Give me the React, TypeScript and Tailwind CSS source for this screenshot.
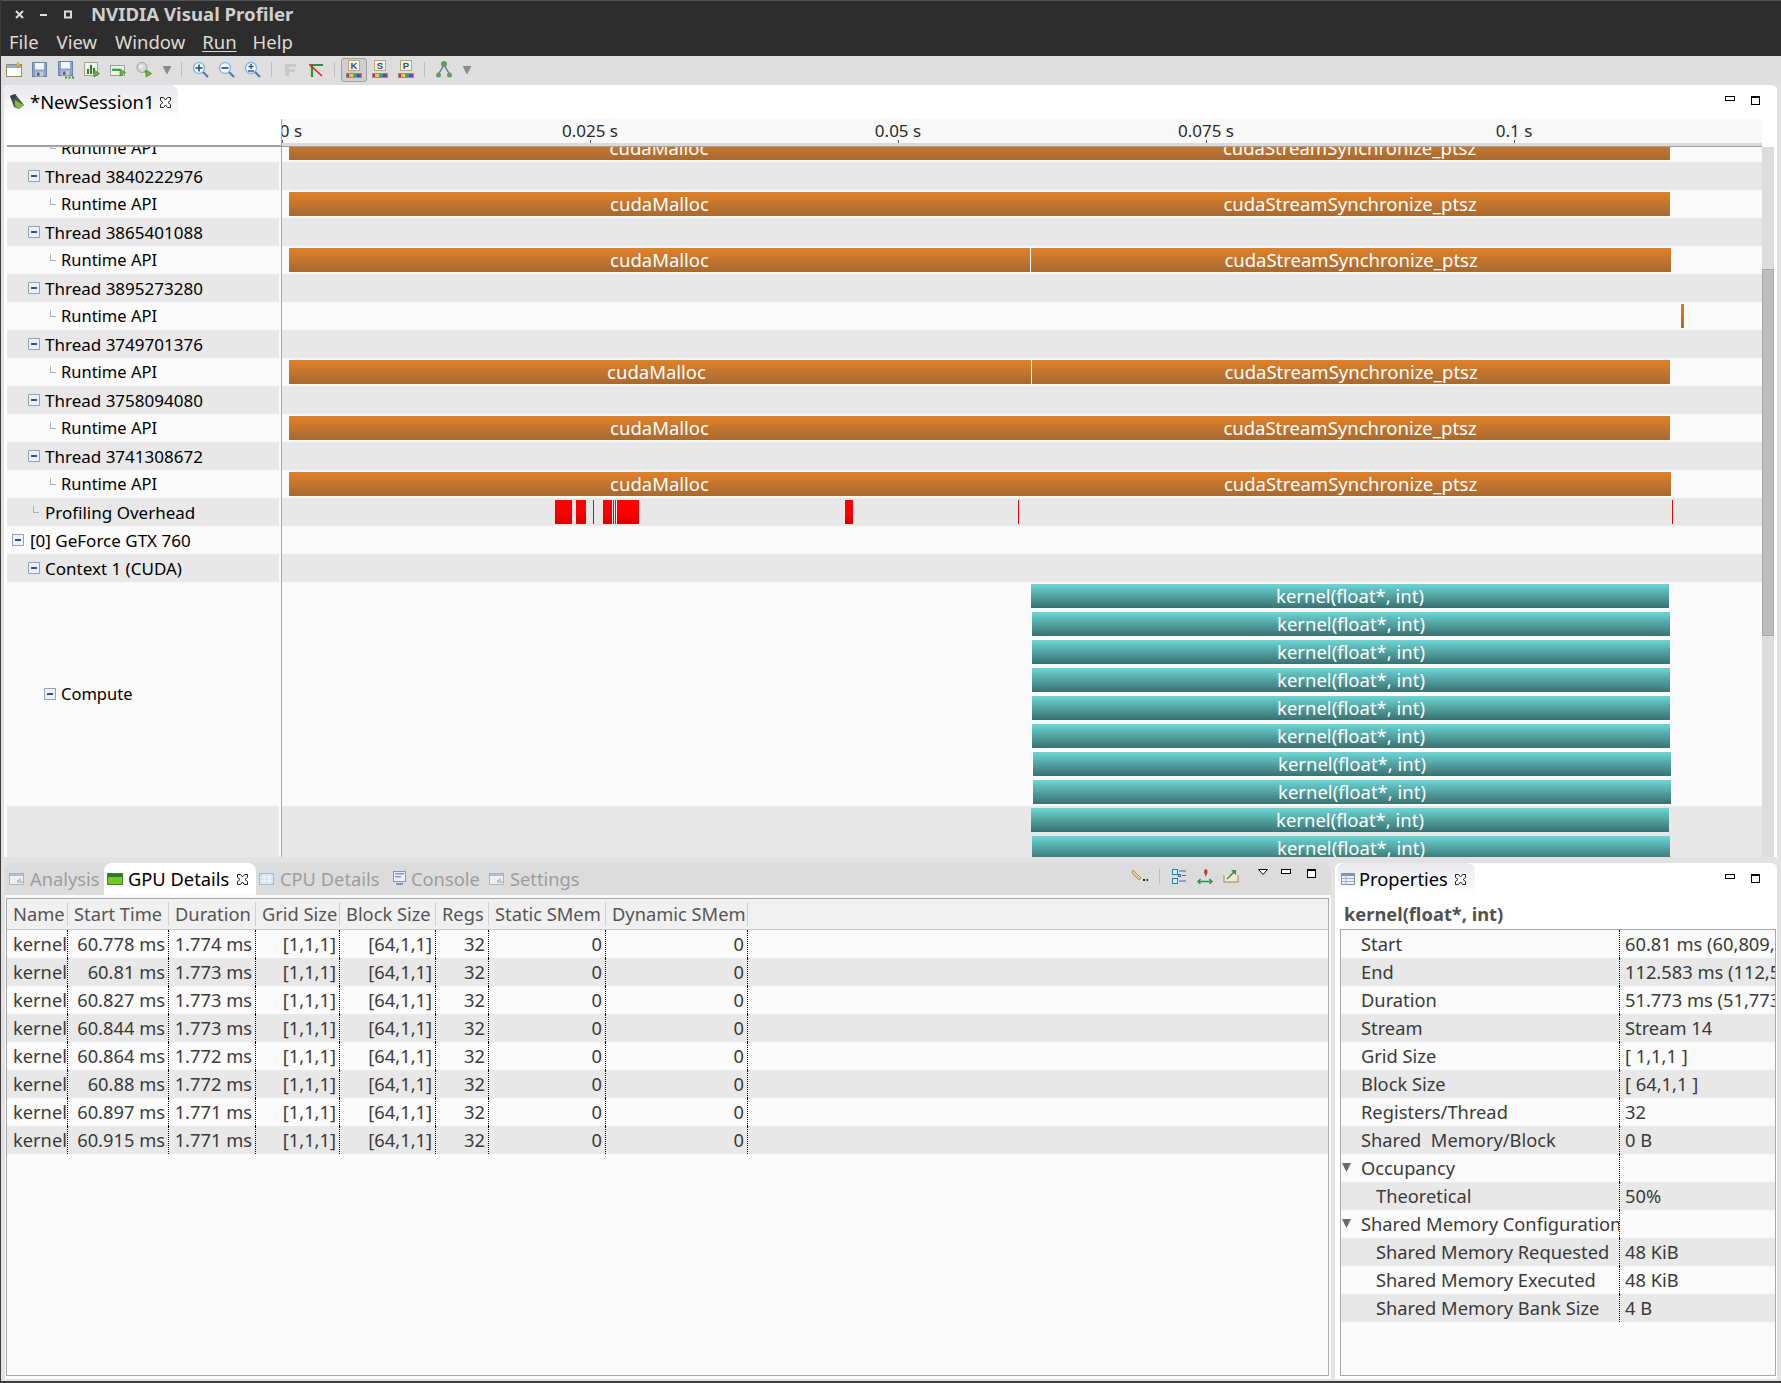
import * as React from 'react'
import clsx from 'clsx'

const RUNTIME_ROWS = [
  {thread: '3840222976', split: 1030, end: 1670, sep: false, shift: 0},
  {thread: '3865401088', split: 1030, end: 1671, sep: true, shift: 0},
  {thread: '3895273280', split: 0, end: 0, sep: false, shift: 0},
  {thread: '3749701376', split: 1031, end: 1670, sep: true, shift: 7},
  {thread: '3758094080', split: 1030, end: 1670, sep: false, shift: 0},
  {thread: '3741308672', split: 1030, end: 1671, sep: false, shift: 0},
]

const ORIGIN = 282

const OVERHEAD = [
  [555, 17],
  [576, 10],
  [593, 1],
  [603, 9],
  [613, 1],
  [615, 1],
  [617, 22],
  [845, 8],
  [1018, 1],
  [1672, 1],
]

const KERNELS = [
  [1031, 1669],
  [1032, 1670],
  [1032, 1670],
  [1032, 1670],
  [1032, 1670],
  [1032, 1670],
  [1033, 1671],
  [1033, 1671],
]

const TICKS = [
  {x: 282, label: '0 s'},
  {x: 590, label: '0.025 s'},
  {x: 898, label: '0.05 s'},
  {x: 1206, label: '0.075 s'},
  {x: 1514, label: '0.1 s'},
]

const COLUMNS = [
  {name: 'Name', w: 61},
  {name: 'Start Time', w: 101},
  {name: 'Duration', w: 87},
  {name: 'Grid Size', w: 84},
  {name: 'Block Size', w: 96},
  {name: 'Regs', w: 53},
  {name: 'Static SMem', w: 117},
  {name: 'Dynamic SMem', w: 142},
]

const DETAILS = [
  ['60.778 ms', '1.774 ms'],
  ['60.81 ms', '1.773 ms'],
  ['60.827 ms', '1.773 ms'],
  ['60.844 ms', '1.773 ms'],
  ['60.864 ms', '1.772 ms'],
  ['60.88 ms', '1.772 ms'],
  ['60.897 ms', '1.771 ms'],
  ['60.915 ms', '1.771 ms'],
]

const PROPERTIES = [
  {key: 'Start', value: '60.81 ms (60,809,'},
  {key: 'End', value: '112.583 ms (112,582,'},
  {key: 'Duration', value: '51.773 ms (51,773,'},
  {key: 'Stream', value: 'Stream 14'},
  {key: 'Grid Size', value: '[ 1,1,1 ]'},
  {key: 'Block Size', value: '[ 64,1,1 ]'},
  {key: 'Registers/Thread', value: '32'},
  {key: 'Shared  Memory/Block', value: '0 B'},
  {key: 'Occupancy', value: '', open: true},
  {key: 'Theoretical', value: '50%', sub: true},
  {key: 'Shared Memory Configuration', value: '', open: true},
  {key: 'Shared Memory Requested', value: '48 KiB', sub: true},
  {key: 'Shared Memory Executed', value: '48 KiB', sub: true},
  {key: 'Shared Memory Bank Size', value: '4 B', sub: true},
]

function Svg({w = 16, h = 16, children}: {w?: number; h?: number; children: React.ReactNode}) {
  return (
    <svg width={w} height={h} viewBox={`0 0 ${w} ${h}`} className="block shrink-0">
      {children}
    </svg>
  )
}

function Floppy() {
  return (
    <g>
      <rect x="0.5" y="0.5" width="14" height="14" fill="#8ba4cc" stroke="#6a84ad" />
      <rect x="3" y="1" width="9" height="6.5" fill="#f2f5fa" />
      <rect x="3.5" y="9.5" width="8" height="5" fill="#c4c8ce" />
      <rect x="5" y="10.5" width="2.5" height="3.5" fill="#56647c" />
    </g>
  )
}

function PlayBadge({x = 10, y = 8}: {x?: number; y?: number}) {
  return <path d={`M${x} ${y}l5.5 3.5l-5.5 3.5z`} fill="#6db33f" stroke="#3f7f1f" strokeWidth="0.7" />
}

function Lens({sign}: {sign: 'plus' | 'minus' | 'fit'}) {
  return (
    <Svg w={17} h={17}>
      <circle cx="7" cy="7" r="5.5" fill="#f3f7fb" stroke="#93b3d3" strokeWidth="1.4" />
      <path d="M11 11l5 5" stroke="#4a78ab" strokeWidth="2" />
      {sign !== 'fit' && <path d="M3.5 7h7" stroke="#2c5b9c" strokeWidth="1.8" />}
      {sign === 'plus' && <path d="M7 3.5v7" stroke="#2c5b9c" strokeWidth="1.8" />}
      {sign === 'fit' && <path d="M7 3v5M4.5 5.5h5M4 10h6" stroke="#2c5b9c" strokeWidth="1.5" />}
    </Svg>
  )
}

function Palette({letter}: {letter: string}) {
  const colors = ['#d8262c', '#f0c419', '#e8e020', '#3fae49', '#18a0c8', '#3657b0', '#c02a90']
  return (
    <svg width="16" height="20" viewBox="0 0 16 20" className="block">
      <rect x="2.5" y="0.5" width="11" height="10" fill="#f4f0e4" stroke="#c4a868" />
      <text x="8" y="9" textAnchor="middle" fontSize="9.5" fontWeight="700" fill="#2c4a86" fontFamily="Liberation Sans">
        {letter}
      </text>
      <rect x="0" y="13" width="16" height="5" fill="#8d8d9d" />
      {colors.map((c, i) => (
        <rect key={c} x={1 + i * 2} y="14" width="2" height="3" fill={c} />
      ))}
    </svg>
  )
}

function DropArrow() {
  return (
    <svg width="8" height="8" viewBox="0 0 8 8" className="block">
      <path d="M0 0h8l-4 8z" fill="#8c8c8c" stroke="#757575" strokeWidth="0.5" />
    </svg>
  )
}

function Tool({children, selected, className}: {children: React.ReactNode; selected?: boolean; className?: string}) {
  return (
    <div
      className={clsx(
        'w-[26px] h-[24px] flex items-center justify-center rounded-[3px]',
        selected && 'bg-[#cfcfcf] border border-[#a2a2a2]',
        className,
      )}
    >
      {children}
    </div>
  )
}

function ToolSep({className}: {className: string}) {
  return <div className={clsx('w-[1px] h-[15px] bg-[#bdbdbd]', className)} />
}

function Toolbar() {
  return (
    <div className="h-[29px] flex items-center pb-[2px] bg-[#dedede]">
      <Tool>
        <Svg>
          <rect x="0.5" y="2.5" width="15" height="12" fill="#fdfdf8" stroke="#9b8b5a" />
          <rect x="1" y="3" width="14" height="3" fill="#8cb0dc" />
          <path d="M12 0l1 2l2 1l-2 1l-1 2l-1-2l-2-1l2-1z" fill="#f0b030" stroke="#a87818" strokeWidth="0.4" />
        </Svg>
      </Tool>
      <Tool>
        <Svg>
          <Floppy />
        </Svg>
      </Tool>
      <Tool>
        <Svg h={18}>
          <Floppy />
          <path d="M7 16.5h2M10.5 16.5h2M14 16.5h2" stroke="#3f8f2f" strokeWidth="2" />
        </Svg>
      </Tool>
      <Tool>
        <Svg>
          <rect x="0.5" y="0.5" width="13" height="13" fill="#f4f2e8" stroke="#a8a088" />
          <path d="M4 12V7M7 12V3M10 12V6" stroke="#2f7a3a" strokeWidth="2" />
          <PlayBadge />
        </Svg>
      </Tool>
      <Tool>
        <Svg>
          <rect x="0.5" y="3.5" width="14" height="10" fill="#f0f0ec" stroke="#98a0a0" />
          <rect x="2" y="6" width="8" height="3" fill="#3fa04f" />
          <rect x="2" y="6" width="8" height="1" fill="#9fd8a8" />
          <PlayBadge x={10} y={7} />
        </Svg>
      </Tool>
      <Tool>
        <Svg>
          <circle cx="6" cy="5.5" r="5" fill="#d6d6d6" stroke="#a0a0a0" />
          <circle cx="5" cy="4.5" r="2" fill="#f0f0f0" />
          <path d="M9 9l3 3" stroke="#8a8a8a" strokeWidth="2" />
          <PlayBadge x={10} y={8} />
        </Svg>
      </Tool>
      <div className="w-[19px] flex justify-center">
        <DropArrow />
      </div>
      <ToolSep className="ml-[5px]" />
      <Tool className="ml-[5px]">
        <Lens sign="plus" />
      </Tool>
      <Tool>
        <Lens sign="minus" />
      </Tool>
      <Tool>
        <Lens sign="fit" />
      </Tool>
      <ToolSep className="ml-[6px]" />
      <Tool className="ml-[5px]">
        <Svg w={13} h={14}>
          <path d="M1 1h11v3H5v2h6v3H5v4H1z" fill="#c8c8c8" />
        </Svg>
      </Tool>
      <Tool>
        <Svg w={14} h={14}>
          <path d="M3 14V2h11" fill="none" stroke="#2f8f3f" strokeWidth="2.2" />
          <path d="M0 1l13 12" stroke="#e01818" strokeWidth="1.5" />
        </Svg>
      </Tool>
      <ToolSep className="ml-[5px]" />
      <Tool selected className="ml-[6px]">
        <Palette letter="K" />
      </Tool>
      <Tool>
        <Palette letter="S" />
      </Tool>
      <Tool>
        <Palette letter="P" />
      </Tool>
      <ToolSep className="ml-[5px]" />
      <Tool className="ml-[6px]">
        <Svg h={17}>
          <path d="M8 4L2.5 13M8 4l5.5 9" stroke="#4f6f8f" strokeWidth="1.3" fill="none" />
          <circle cx="8" cy="3" r="3" fill="#5f9f5f" />
          <circle cx="2.5" cy="14" r="2.5" fill="#5f9f5f" />
          <circle cx="13.5" cy="14" r="2.5" fill="#5f9f5f" />
        </Svg>
      </Tool>
      <div className="w-[19px] flex justify-center">
        <DropArrow />
      </div>
    </div>
  )
}

function CloseX() {
  return (
    <svg width="11" height="11" viewBox="0 0 11 11" className="block shrink-0">
      <path
        d="M0.5 0.5h3L5.5 3L7.5 0.5h3v3L8 5.5L10.5 7.5v3h-3L5.5 8L3.5 10.5h-3v-3L3 5.5L0.5 3.5z"
        fill="#fff"
        stroke="#222"
        strokeWidth="1"
      />
    </svg>
  )
}

function PaneButtons({className}: {className?: string}) {
  return (
    <div className={clsx('flex items-start', className)}>
      <div className="w-[10px] h-[5px] border border-black bg-white" />
      <div className="ml-[16px] w-[9px] h-[9px] border border-black border-t-2 bg-white" />
    </div>
  )
}

function TreeBox() {
  return (
    <div className="w-[12px] h-[12px] shrink-0 border border-[#8fa3c0] bg-[#eef2f8] flex items-center justify-center">
      <div className="w-[6px] h-[2px] bg-[#2f4f8f]" />
    </div>
  )
}

function Elbow() {
  return <div className="w-[6px] h-[7px] shrink-0 mb-[6px] border-l border-b border-[#9fb0c8]" />
}

function Row({
  gray,
  height = 'h-[28px]',
  label,
  children,
}: {
  gray?: boolean
  height?: string
  label: React.ReactNode
  children?: React.ReactNode
}) {
  return (
    <div className={clsx('flex shrink-0', height)}>
      <div
        className={clsx(
          'w-[272px] flex items-center text-black',
          gray ? 'bg-[#e8e8e8]' : 'bg-[#fafafa]',
        )}
      >
        {label}
      </div>
      <div className="w-[2px] bg-[#fafafa]" />
      <div className="w-[1px] bg-[#a8a8a8]" />
      <div className={clsx('relative flex-1 overflow-hidden', gray ? 'bg-[#e8e8e8]' : 'bg-[#fafafa]')}>{children}</div>
    </div>
  )
}

function Bar({
  from,
  to,
  tone,
  top = 2,
  pad = 0,
  children,
}: {
  from: number
  to: number
  tone: 'orange' | 'teal' | 'red'
  top?: number
  pad?: number
  children?: React.ReactNode
}) {
  return (
    <div
      className={clsx(
        'absolute h-[24px] flex items-center justify-center text-white text-[18.5px] leading-none whitespace-nowrap bg-linear-to-b',
        tone === 'orange' && 'from-[#e28024] to-[#a56a33]',
        tone === 'teal' && 'from-[#6ad8d6] to-[#3b7070]',
        tone === 'red' && 'from-[#ff0000] via-[#ff0000] to-[#d80000]',
      )}
      style={{left: from - ORIGIN, width: to - from, top, paddingRight: pad}}
    >
      {children}
    </div>
  )
}

function RuntimeBars({split, end, sep, shift}: {split: number; end: number; sep?: boolean; shift?: number}) {
  return (
    <>
      <Bar from={289} to={split} tone="orange" pad={shift}>
        cudaMalloc
      </Bar>
      <Bar from={split + (sep ? 1 : 0)} to={end} tone="orange">
        cudaStreamSynchronize_ptsz
      </Bar>
    </>
  )
}

function RuntimeLabel() {
  return (
    <div className="flex items-center pl-[43px] gap-[5px] text-[16.5px]">
      <Elbow />
      <span>Runtime API</span>
    </div>
  )
}

function Timeline() {
  return (
    <div className="h-[772px] bg-white rounded-t-[5px] flex flex-col relative overflow-hidden">
      <div className="h-[34px] shrink-0 flex items-end">
        <div className="h-[34px] w-[174px] flex items-center pl-[5px] rounded-t-[8px] bg-linear-to-b from-[#e9e9ee] to-white">
          <Svg h={16}>
            <path d="M1 2L6 0L15 11L10 15L5 13z" fill="#3f5a48" />
            <path d="M6 6L15 11L10 15L6 12z" fill="#86b840" />
            <path d="M1 2L6 0L8 3L3 6z" fill="#34444c" />
          </Svg>
          <span className="ml-[5px] text-black text-[18.4px]">*NewSession1</span>
          <div className="ml-[6px]">
            <CloseX />
          </div>
        </div>
        <PaneButtons className="absolute left-[1721px] top-[11px]" />
      </div>
      <div className="flex pl-[3px] pr-[15px] h-[27px] shrink-0">
        <div className="w-[274px] border-b border-[#a0a0a0] bg-white" />
        <div className="w-[1px] bg-[#a8a8a8]" />
        <div className="relative flex-1 overflow-hidden bg-[#f8f8f8] border-b-[3px] border-[#dadada]">
          {TICKS.map(t => (
            <React.Fragment key={t.label}>
              <span
                className="absolute top-[1px] -translate-x-1/2 text-[17px] leading-[22px] text-[#2a2a2a] whitespace-nowrap"
                style={{left: t.x - ORIGIN + (t.x === ORIGIN ? 9 : 0)}}
              >
                {t.label}
              </span>
              <div className="absolute bottom-0 w-[1px] h-[3px] bg-[#555]" style={{left: t.x - ORIGIN}} />
            </React.Fragment>
          ))}
        </div>
      </div>
      <div className="flex flex-1 pl-[3px] overflow-hidden">
        <div className="w-[1755px] shrink-0 flex flex-col overflow-hidden border-t border-[#a0a0a0]">
          <div className="-mt-[13px] flex flex-col">
            <Row label={<RuntimeLabel />}>
              <RuntimeBars split={1029} end={1670} />
            </Row>
            {RUNTIME_ROWS.map(r => (
              <React.Fragment key={r.thread}>
                <Row
                  gray
                  label={
                    <div className="flex items-center pl-[21px] gap-[5px]">
                      <TreeBox />
                      Thread {r.thread}
                    </div>
                  }
                />
                <Row label={<RuntimeLabel />}>
                  {r.end > 0 ? (
                    <RuntimeBars split={r.split} end={r.end} sep={r.sep} shift={r.shift} />
                  ) : (
                    <Bar from={1681} to={1684} tone="orange" />
                  )}
                </Row>
              </React.Fragment>
            ))}
            <Row
              gray
              label={
                <div className="flex items-center pl-[26px]">
                  <Elbow />
                  <span className="ml-[6px]">Profiling Overhead</span>
                </div>
              }
            >
              {OVERHEAD.map(([x, w]) => (
                <Bar key={x} from={x} to={x + w} tone="red" />
              ))}
            </Row>
            <Row
              label={
                <div className="flex items-center pl-[5px] gap-[6px]">
                  <TreeBox />
                  [0] GeForce GTX 760
                </div>
              }
            />
            <Row
              gray
              label={
                <div className="flex items-center pl-[21px] gap-[5px]">
                  <TreeBox />
                  Context 1 (CUDA)
                </div>
              }
            />
            <Row
              height="h-[224px]"
              label={
                <div className="flex items-center pl-[37px] gap-[5px] text-[16.5px]">
                  <TreeBox />
                  Compute
                </div>
              }
            >
              {KERNELS.map(([a, b], i) => (
                <Bar key={i} from={a} to={b} tone="teal" top={2 + i * 28}>
                  kernel(float*, int)
                </Bar>
              ))}
            </Row>
            <Row gray height="h-[56px]" label={null}>
              <Bar from={1031} to={1669} tone="teal">
                kernel(float*, int)
              </Bar>
              <Bar from={1032} to={1670} tone="teal" top={30}>
                kernel(float*, int)
              </Bar>
            </Row>
          </div>
        </div>
        <div className="w-[12px] mt-[1px] shrink-0 bg-[#dcdcdc] flex flex-col">
          <div className="h-[122px]" />
          <div className="h-[367px] bg-[#bdbdbd] border border-[#a6a6a6]" />
        </div>
      </div>
    </div>
  )
}

function BottomTab({icon, label, className}: {icon: React.ReactNode; label: string; className: string}) {
  return (
    <div className={clsx('flex items-center text-[#9c9c9c]', className)}>
      {icon}
      <span className="ml-[5px] pt-[1px]">{label}</span>
    </div>
  )
}

function WindowIcon() {
  return (
    <Svg h={14}>
      <rect x="0.5" y="1.5" width="14" height="11" fill="#eef0f2" stroke="#aab4c0" />
      <rect x="1" y="2" width="13" height="2" fill="#a8c0d8" />
      <path d="M9 11V8M11 11V6M13 11V9" stroke="#8aa098" />
    </Svg>
  )
}

function GpuTable() {
  return (
    <div className="flex-1 mt-[3px] ml-[1px] mr-[2px] mb-[3px] border border-[#a8a8a8] bg-[#fafafa] flex flex-col overflow-hidden">
      <div className="h-[31px] shrink-0 flex items-center bg-[#f0f0f0] border-b border-[#c8c8c8] text-[#555]">
        {COLUMNS.map(c => (
          <div
            key={c.name}
            className="h-[24px] border-r border-[#d0d0d0] pl-[6px] pt-[1px] flex items-center whitespace-nowrap overflow-hidden"
            style={{width: c.w}}
          >
            {c.name}
          </div>
        ))}
      </div>
      {DETAILS.map(([start, duration], i) => {
        const cells = ['kernel(float*, int)', start, duration, '[1,1,1]', '[64,1,1]', '32', '0', '0']
        return (
          <div key={start} className={clsx('h-[28px] shrink-0 flex text-[#3a3a3a]', i % 2 === 1 && 'bg-[#e8e8e8]')}>
            {cells.map((cell, j) => (
              <div
                key={COLUMNS[j].name}
                style={{width: COLUMNS[j].w}}
                className={clsx(
                  'h-full pt-[1px] border-r border-dotted border-black flex items-center overflow-hidden whitespace-nowrap',
                  j === 0 ? 'pl-[6px]' : 'justify-end pr-[3px]',
                )}
              >
                {cell}
              </div>
            ))}
          </div>
        )
      })}
    </div>
  )
}

function GpuPane() {
  return (
    <div className="w-[1326px] flex flex-col rounded-t-[6px] bg-[#fafafa] overflow-hidden">
      <div className="h-[32px] shrink-0 flex items-center bg-[#dcdcdc] relative">
        <BottomTab icon={<WindowIcon />} label="Analysis" className="ml-[4px] w-[90px]" />
        <div className="ml-[5px] w-[152px] shrink-0 h-full bg-white rounded-t-[8px] flex items-center pl-[3px] text-black">
          <Svg h={14}>
            <rect x="0.5" y="1.5" width="15" height="11" fill="#74c820" stroke="#3a8a20" />
            <rect x="1" y="2" width="14" height="3" fill="#2f6f4f" />
          </Svg>
          <span className="ml-[5px] pt-[1px]">GPU Details</span>
          <div className="ml-[8px]">
            <CloseX />
          </div>
        </div>
        <BottomTab
          icon={
            <Svg h={14}>
              <rect x="0.5" y="1.5" width="14" height="11" fill="#cfe2f2" stroke="#a0bcd4" />
              <path d="M5 2v10M10 2v10M1 5h13M1 9h13" stroke="#f4f8fb" />
            </Svg>
          }
          label="CPU Details"
          className="ml-[3px] w-[134px]"
        />
        <BottomTab
          icon={
            <Svg w={13} h={15}>
              <rect x="0.5" y="0.5" width="12" height="10" fill="#eef2f8" stroke="#7f97b8" />
              <rect x="2" y="2" width="9" height="1.5" fill="#7f97b8" />
              <rect x="2" y="5" width="6" height="1.5" fill="#7f97b8" />
              <path d="M3 13h7" stroke="#7f97b8" strokeWidth="2" />
            </Svg>
          }
          label="Console"
          className="w-[96px]"
        />
        <BottomTab icon={<WindowIcon />} label="Settings" className="" />
        <div className="absolute right-[15px] top-[6px] flex items-start">
          <Svg h={14}>
            <path d="M1 1l8 8l-2 2l-7-7z" fill="#e4c88c" stroke="#8a7a50" strokeWidth="0.7" />
            <path d="M11 11h2M14.5 11h1.5" stroke="#222" strokeWidth="2" />
          </Svg>
          <div className="ml-[11px] w-[1px] h-[15px] bg-[#bdbdbd]" />
          <div className="ml-[12px]">
            <Svg w={14} h={15}>
              <rect x="0.5" y="0.5" width="5" height="5" fill="#d8ecfa" stroke="#1f7fc0" />
              <rect x="0.5" y="9.5" width="5" height="5" fill="#d8ecfa" stroke="#1f7fc0" />
              <rect x="6.5" y="5.5" width="2" height="2" fill="none" stroke="#1f7fc0" />
              <path d="M7 2h7M10 6.5h4M7 12h7" stroke="#3a6f8f" />
            </Svg>
          </div>
          <div className="ml-[11px]">
            <Svg h={15}>
              <path d="M9 0c2.5 1 2 5-1 8c1-3-1-3-1-5c0-2 1-3 2-3z" fill="#c04030" />
              <path d="M1 12.5h14M3.5 10L1 12.5L3.5 15M12.5 10L15 12.5L12.5 15" fill="none" stroke="#2f8f3f" strokeWidth="1.4" />
            </Svg>
          </div>
          <div className="ml-[10px]">
            <Svg h={15}>
              <path d="M1 6v7h14V6" fill="#f0e8d0" stroke="#b0a888" strokeWidth="1.5" />
              <path d="M4 10L11 3" stroke="#2f8f3f" strokeWidth="1.4" />
              <path d="M8 1h5v5z" fill="#2f8f3f" />
            </Svg>
          </div>
          <svg width="10" height="6" viewBox="0 0 10 6" className="block ml-[19px]">
            <path d="M0.5 0.5h9l-4.5 5z" fill="#fff" stroke="#000" />
          </svg>
          <PaneButtons className="ml-[13px]" />
        </div>
      </div>
      <GpuTable />
    </div>
  )
}

function PropertiesPane() {
  return (
    <div className="w-[442px] ml-[4px] flex flex-col bg-white rounded-t-[6px] relative">
      <div className="h-[32px] shrink-0 flex">
        <div className="ml-[2px] w-[138px] h-full rounded-t-[8px] bg-linear-to-b from-[#e9e9ee] to-white flex items-center pl-[4px] text-black">
          <Svg h={14}>
            <rect x="0.5" y="1.5" width="13" height="11" fill="#eef2f8" stroke="#7f8fa8" />
            <rect x="1" y="2" width="12" height="2" fill="#7f97b8" />
            <path d="M1 6.5h12M1 9.5h12M5 4v8" stroke="#a0b0c8" />
          </Svg>
          <span className="ml-[2px] pt-[1px]">Properties</span>
          <div className="ml-[7px]">
            <CloseX />
          </div>
        </div>
        <PaneButtons className="absolute right-[17px] top-[11px]" />
      </div>
      <div className="h-[34px] shrink-0 flex items-center pt-[4px] pl-[9px] font-bold text-[#505050]">
        kernel(float*, int)
      </div>
      <div className="flex-1 ml-[5px] mr-[1px] mb-[3px] border border-[#a8a8a8] bg-[#fafafa] overflow-hidden">
        {PROPERTIES.map((p, i) => (
          <div key={p.key} className={clsx('h-[28px] flex text-[#3a3a3a]', i % 2 === 1 && 'bg-[#e8e8e8]')}>
            <div className="w-[279px] shrink-0 h-full pt-[1px] border-r border-dotted border-black flex items-center whitespace-nowrap overflow-hidden">
              {p.open ? (
                <svg width="9" height="9" viewBox="0 0 9 9" className="block ml-[1px] mb-[3px] mr-[10px] shrink-0">
                  <path d="M0 0h9l-4.5 9z" fill="#6a6a6a" />
                </svg>
              ) : null}
              <span className={clsx('whitespace-pre', !p.open && (p.sub ? 'ml-[35px]' : 'ml-[20px]'))}>{p.key}</span>
            </div>
            <div className="flex-1 pl-[5px] pt-[1px] flex items-center overflow-hidden whitespace-nowrap">{p.value}</div>
          </div>
        ))}
      </div>
    </div>
  )
}

export default function App() {
  return (
    <div className="w-[1781px] h-[1383px] flex flex-col overflow-hidden bg-[#e2e2e2] font-['Noto_Sans',sans-serif] text-[17px] leading-none border-l border-b-2 border-[#3c3c3c]">
      <div className="h-[28px] shrink-0 bg-[#2e2d2d] flex items-center text-[#cfcfcf] border-t border-[#555]">
        <svg width="60" height="12" viewBox="0 0 60 12" className="block ml-[14px]">
          <path d="M1 2l7 7M8 2l-7 7" stroke="#dcdcdc" strokeWidth="2" />
          <path d="M25 6h7" stroke="#dcdcdc" strokeWidth="2" />
          <rect x="50" y="2.5" width="6" height="6" fill="none" stroke="#dcdcdc" strokeWidth="2" />
        </svg>
        <span className="ml-[16px] font-bold text-[18.6px]">NVIDIA Visual Profiler</span>
      </div>
      <div className="h-[28px] shrink-0 bg-[#2e2d2d] flex items-center pl-[8px] gap-[18px] text-[#dfdbd2] text-[18.5px]">
        <span>File</span>
        <span>View</span>
        <span>Window</span>
        <span className="-ml-[1px] underline underline-offset-2">Run</span>
        <span className="-ml-[2px]">Help</span>
      </div>
      <Toolbar />
      <div className="pl-[3px] pr-[4px]">
        <Timeline />
      </div>
      <div className="flex pl-[4px] mt-[6px] flex-1 pb-[2px] min-h-0 text-[18.3px]">
        <GpuPane />
        <PropertiesPane />
      </div>
    </div>
  )
}
